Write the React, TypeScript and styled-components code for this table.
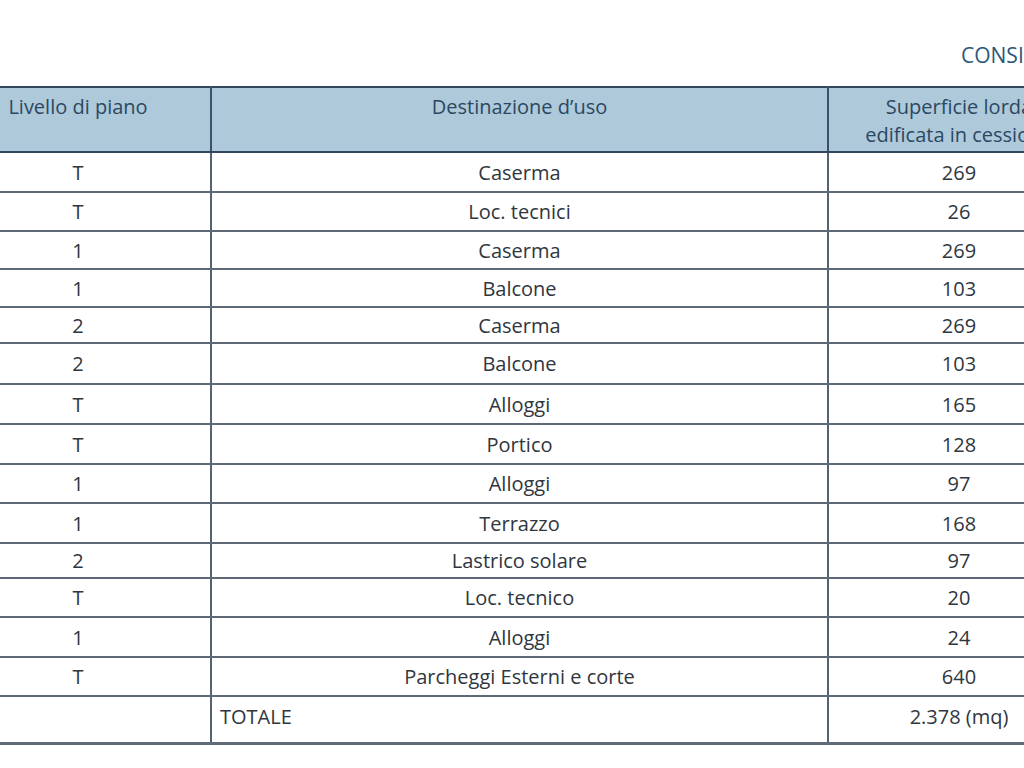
import styled, { createGlobalStyle } from "styled-components";

const GlobalStyle = createGlobalStyle`
  html, body {
    margin: 0;
    padding: 0;
    background: #ffffff;
  }
  body {
    font-family: "Open Sans", "Noto Sans", "Liberation Sans", sans-serif;
  }
`;

const rows: { level: string; use: string; area: string; h: number }[] = [
  { level: "T", use: "Caserma", area: "269", h: 40 },
  { level: "T", use: "Loc. tecnici", area: "26", h: 39 },
  { level: "1", use: "Caserma", area: "269", h: 38 },
  { level: "1", use: "Balcone", area: "103", h: 38 },
  { level: "2", use: "Caserma", area: "269", h: 36 },
  { level: "2", use: "Balcone", area: "103", h: 41 },
  { level: "T", use: "Alloggi", area: "165", h: 40 },
  { level: "T", use: "Portico", area: "128", h: 40 },
  { level: "1", use: "Alloggi", area: "97", h: 39 },
  { level: "1", use: "Terrazzo", area: "168", h: 40 },
  { level: "2", use: "Lastrico solare", area: "97", h: 35 },
  { level: "T", use: "Loc. tecnico", area: "20", h: 39 },
  { level: "1", use: "Alloggi", area: "24", h: 40 },
  { level: "T", use: "Parcheggi Esterni e corte", area: "640", h: 39 },
];

export default function App() {
  return (
    <>
      <GlobalStyle />
      <Page>
        <TitleBar>
          <Title>CONSISTENZA</Title>
        </TitleBar>
        <Table>
          <colgroup>
            <col style={{ width: 266 }} />
            <col style={{ width: 617 }} />
            <col style={{ width: 262 }} />
          </colgroup>
          <thead>
            <tr>
              <HeadCell>Livello di piano</HeadCell>
              <HeadCell>Destinazione d’uso</HeadCell>
              <HeadCell>
                Superficie lorda
                <br />
                edificata in cessione
              </HeadCell>
            </tr>
          </thead>
          <tbody>
            {rows.map((r, i) => (
              <Row key={i} $h={r.h}>
                <Cell>{r.level}</Cell>
                <Cell>{r.use}</Cell>
                <Cell>{r.area}</Cell>
              </Row>
            ))}
            <Row $h={47} $last>
              <Cell />
              <Cell $left>TOTALE</Cell>
              <Cell>2.378 (mq)</Cell>
            </Row>
          </tbody>
        </Table>
      </Page>
    </>
  );
}

const Page = styled.div`
  width: 1024px;
  height: 768px;
  overflow: hidden;
  background: #ffffff;
`;

const TitleBar = styled.div`
  height: 86px;
  display: flex;
  align-items: flex-start;
  padding-left: 961px;
  box-sizing: border-box;
  white-space: nowrap;
`;

const Title = styled.div`
  margin-top: 41px;
  font-size: 21px;
  color: #2a5777;
`;

const Table = styled.table`
  margin-left: -56px;
  width: 1145px;
  table-layout: fixed;
  border-collapse: collapse;
  color: #30363e;
  font-size: 20px;
`;

const HeadCell = styled.th`
  height: 65px;
  box-sizing: border-box;
  background: #adc9da;
  color: #2b4862;
  font-weight: 400;
  font-size: 20px;
  line-height: 28px;
  vertical-align: top;
  padding: 5px 0 0;
  text-align: center;
  border-top: 2px solid #33475c;
  border-bottom: 2px solid #33475c;
  border-left: 2px solid #3d5168;
  border-right: 2px solid #3d5168;
`;

const Row = styled.tr<{ $h: number; $last?: boolean }>`
  height: ${(p) => p.$h}px;
  & > td {
    border-bottom: ${(p) => (p.$last ? "3px solid #5f6b78" : "2px solid #5d6976")};
    padding-bottom: ${(p) => (p.$last ? "6px" : "0")};
  }
`;

const Cell = styled.td<{ $left?: boolean }>`
  padding-left: ${(p) => (p.$left ? "8px" : "0")};
  padding-right: 0;
  padding-top: 0;
  text-align: ${(p) => (p.$left ? "left" : "center")};
  vertical-align: middle;
  border-left: 2px solid #56626f;
  border-right: 2px solid #56626f;
  white-space: nowrap;
`;
